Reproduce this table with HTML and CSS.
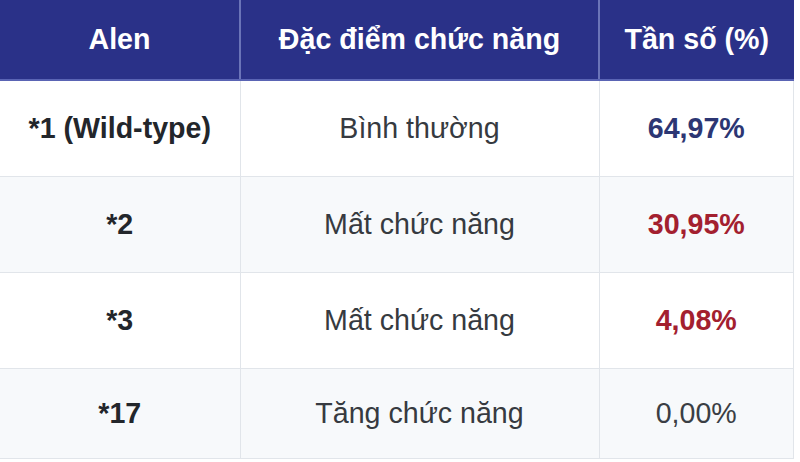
FILE: index.html
```html
<!DOCTYPE html>
<html lang="vi">
<head>
<meta charset="utf-8">
<link rel="stylesheet" href="styles.css">
</head>
<body>
<table class="allele-table">
  <thead>
    <tr>
      <th class="c1">Alen</th>
      <th class="c2">Đặc điểm chức năng</th>
      <th class="c3">Tần số (%)</th>
    </tr>
  </thead>
  <tbody>
    <tr>
      <td class="allele">*1 (Wild-type)</td>
      <td>Bình thường</td>
      <td class="freq normal">64,97%</td>
    </tr>
    <tr>
      <td class="allele">*2</td>
      <td>Mất chức năng</td>
      <td class="freq loss">30,95%</td>
    </tr>
    <tr>
      <td class="allele">*3</td>
      <td>Mất chức năng</td>
      <td class="freq loss">4,08%</td>
    </tr>
    <tr>
      <td class="allele">*17</td>
      <td>Tăng chức năng</td>
      <td class="freq plain">0,00%</td>
    </tr>
  </tbody>
</table>
</body>
</html>
```
FILE: styles.css
```css
html, body {
  margin: 0;
  padding: 0;
  background: #ffffff;
}
body {
  font-family: "Liberation Sans", Arial, sans-serif;
  width: 800px;
  height: 462px;
  overflow: hidden;
}
.allele-table {
  border-collapse: collapse;
  width: 794px;
  table-layout: fixed;
  font-size: 28.6px;
}
.allele-table th {
  background: #2a3188;
  color: #ffffff;
  font-weight: bold;
  height: 79px;
  padding: 0;
  text-align: center;
  border-bottom: 2px solid #5a64b4;
  border-left: 2px solid #6b74b8;
}
.allele-table th:first-child {
  border-left: none;
}
.c1 { width: 239px; }
.c2 { width: 357px; }
.allele-table td {
  height: 95px;
  padding: 0;
  text-align: center;
  color: #363a40;
  border: 1px solid #e1e5ea;
}
.allele-table td:first-child {
  border-left: none;
}
.allele-table tbody tr:nth-child(even) td {
  background: #f7f9fb;
}
.allele-table tbody tr:last-child td {
  height: 89px;
}
.allele {
  font-weight: bold;
  color: #23262b !important;
}
.freq.normal {
  font-weight: bold;
  color: #2c3673;
}
.freq.loss {
  font-weight: bold;
  color: #a3202f;
}
.freq.plain {
  color: #3a3e44;
}
```
